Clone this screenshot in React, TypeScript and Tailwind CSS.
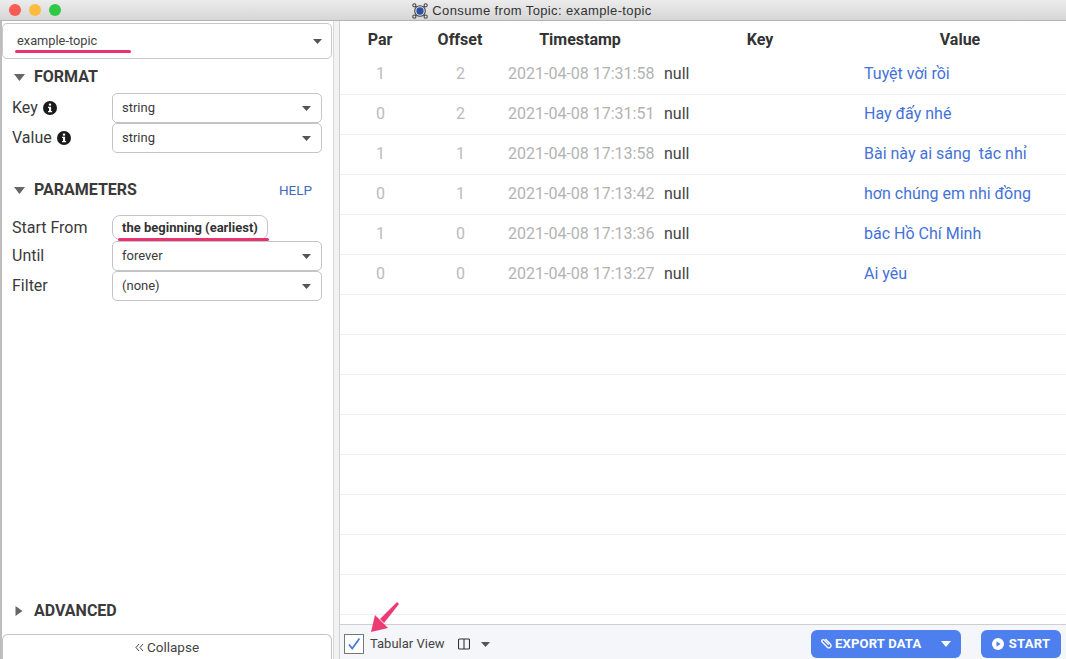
import React from "react";

const rows = [
  ["1", "2", "2021-04-08 17:31:58", "null", "Tuyệt vời rồi"],
  ["0", "2", "2021-04-08 17:31:51", "null", "Hay đấy nhé"],
  ["1", "1", "2021-04-08 17:13:58", "null", "Bài này ai sáng  tác nhỉ"],
  ["0", "1", "2021-04-08 17:13:42", "null", "hơn chúng em nhi đồng"],
  ["1", "0", "2021-04-08 17:13:36", "null", "bác Hồ Chí Minh"],
  ["0", "0", "2021-04-08 17:13:27", "null", "Ai yêu"],
  ...Array.from({ length: 8 }, () => ["", "", "", "", ""]),
];

function Caret({ className = "", w = 9, h = 5 }: { className?: string; w?: number; h?: number }) {
  return (
    <svg width={w} height={h} viewBox="0 0 10 6" preserveAspectRatio="none" className={className}>
      <path d="M0 0h10L5 6z" fill="currentColor" />
    </svg>
  );
}

function CaretRight({ className = "" }: { className?: string }) {
  return (
    <svg width="8" height="10" viewBox="0 0 7 10" className={className}>
      <path d="M0 0l7 5-7 5z" fill="currentColor" />
    </svg>
  );
}

function Info() {
  return (
    <svg width="14" height="14" viewBox="0 0 14 14" className="shrink-0">
      <circle cx="7" cy="7" r="7" fill="#1a1a1a" />
      <rect x="5.9" y="2.6" width="2.2" height="2" fill="#fff" />
      <path d="M5 5.7h3.1v4.2h1v1.3H5V9.9h1V7H5z" fill="#fff" />
    </svg>
  );
}

function Field({ label, info, value }: { label: string; info?: boolean; value: string }) {
  return (
    <div className="flex items-center h-[30px]">
      <div className="w-[100px] flex items-center gap-[5px] text-[16px] text-[#3a3a3a]">
        <span>{label}</span>
        {info && <Info />}
      </div>
      <div className="w-[210px] h-[30px] border border-[#c4c4c4] rounded-[5px] bg-white flex items-center justify-between pl-[9px] pr-[10px] text-[13px] text-[#3a3a3a]">
        <span>{value}</span>
        <Caret className="text-[#555]" />
      </div>
    </div>
  );
}

function Heading({ text, right }: { text: string; right?: boolean }) {
  return (
    <div className="flex items-center">
      <span className="w-[22px] pl-[2px] flex justify-start">
        {right ? (
          <CaretRight className="text-[#666] ml-[1px]" />
        ) : (
          <Caret w={11} h={7} className="text-[#666]" />
        )}
      </span>
      <span className="text-[16px] font-bold text-[#3a3a3a]">{text}</span>
    </div>
  );
}

export default function App() {
  return (
    <div className="relative w-[1066px] h-[659px] overflow-hidden flex flex-col bg-white font-['Roboto',sans-serif]">
      <div className="h-[21px] shrink-0 flex items-center justify-center relative border-b border-[#b4b4b4] bg-gradient-to-b from-[#ececec] to-[#d6d6d6]">
        <div className="absolute left-[9px] top-[4px] flex gap-[8px]">
          <span className="w-[12px] h-[12px] rounded-full bg-[#fb5a55]" />
          <span className="w-[12px] h-[12px] rounded-full bg-[#fdbb3f]" />
          <span className="w-[12px] h-[12px] rounded-full bg-[#2fc945]" />
        </div>
        <div className="flex items-center gap-[4px] pt-[1px] pr-[2px] text-[13px] text-[#333] font-['Liberation_Sans',sans-serif] tracking-[0.37px]">
          <svg width="16" height="16" viewBox="0 0 15 15">
            <path d="M3 3L12 12M12 3L3 12" stroke="#444" strokeWidth="1" />
            <circle cx="7.5" cy="7.5" r="5" fill="#ddd" stroke="#444" />
            <circle cx="7.5" cy="7.5" r="3.4" fill="#2b4fa8" />
            <circle cx="2.2" cy="2.2" r="1.5" fill="none" stroke="#444" />
            <circle cx="12.8" cy="2.2" r="1.5" fill="none" stroke="#444" />
            <circle cx="2.2" cy="12.8" r="1.5" fill="none" stroke="#444" />
            <circle cx="12.8" cy="12.8" r="1.5" fill="none" stroke="#444" />
          </svg>
          <span>Consume from Topic: example-topic</span>
        </div>
      </div>

      <div className="flex-1 flex min-h-0">
        {/* sidebar */}
        <aside className="w-[334px] shrink-0 flex flex-col border-l-2 border-r border-l-[#bdbdbd] border-r-[#d8d8d8] bg-white">
          <div className="h-[36px] mt-[2px] mr-[1px] shrink-0 border border-[#c8c8c8] rounded-[5px] flex items-center justify-between pl-[14px] pr-[9px] text-[12.8px] text-[#444]">
            <span>example-topic</span>
            <Caret className="text-[#555]" />
          </div>
          <div className="pl-[10px] mt-[6px]">
            <Heading text="FORMAT" />
            <div className="mt-[4px] flex flex-col">
              <Field label="Key" info value="string" />
              <Field label="Value" info value="string" />
            </div>
            <div className="mt-[25px] flex items-center justify-between pr-[21px]">
              <Heading text="PARAMETERS" />
              <span className="text-[13.5px] text-[#3f6dbb]">HELP</span>
            </div>
            <div className="mt-[13px] flex items-center h-[25px]">
              <div className="w-[100px] text-[16px] text-[#3a3a3a]">Start From</div>
              <div className="h-[25px] border border-[#c4c4c4] rounded-[8px] flex items-center px-[9px] text-[13px] font-bold text-[#333]">
                the beginning (earliest)
              </div>
            </div>
            <div className="flex flex-col mt-[1px]">
              <Field label="Until" value="forever" />
              <Field label="Filter" value="(none)" />
            </div>
          </div>
          <div className="mt-auto pl-[10px] mb-[11px]">
            <Heading text="ADVANCED" right />
          </div>
          <div className="h-[25px] mr-[1px] shrink-0 border border-b-0 border-[#c4c4c4] rounded-t-[6px] flex items-center justify-center gap-[3px] text-[13.5px] text-[#444]">
            <svg width="9" height="9" viewBox="0 0 9 9">
              <path d="M4 1L1 4.5 4 8M8 1L5 4.5 8 8" fill="none" stroke="#444" strokeWidth="1" />
            </svg>
            <span>Collapse</span>
          </div>
        </aside>

        <div className="w-[5px] shrink-0 bg-[#f2f2f2]" />

        {/* main */}
        <main className="flex-1 flex flex-col min-w-0 border-l border-[#cfcfcf]">
          <div className="flex-1 min-h-0 overflow-hidden">
            <div className="h-[34px] pt-[3px] flex items-center text-[16px] font-bold text-[#333]">
              <span className="w-[80px] text-center">Par</span>
              <span className="w-[80px] text-center">Offset</span>
              <span className="w-[160px] text-center">Timestamp</span>
              <span className="w-[200px] text-center">Key</span>
              <span className="w-[200px] text-center">Value</span>
            </div>
            {rows.map((r, i) => (
              <div key={i} className="h-[40px] pb-[2px] flex items-center border-b border-[#efefef] text-[16px]">
                <span className="w-[80px] pl-[1px] text-center text-[#bbbbbb]">{r[0]}</span>
                <span className="w-[80px] pl-[1px] text-center text-[#bbbbbb]">{r[1]}</span>
                <span className="w-[160px] pl-[8px] text-[#b3b3b3] whitespace-nowrap">{r[2]}</span>
                <span className="w-[200px] pl-[4px] text-[#444]">{r[3]}</span>
                <span className="w-[200px] pl-[4px] text-[#4472d8] whitespace-pre">{r[4]}</span>
              </div>
            ))}
          </div>
          <div className="h-[35px] pt-[4px] shrink-0 border-t border-[#cfcfcf] bg-[#f4f6fa] flex items-center pl-[4px] pr-[5px]">
            <span className="w-[20px] h-[20px] border border-[#777] bg-white flex items-center justify-center">
              <svg width="14" height="14" viewBox="0 0 14 14">
                <path d="M2 7.5l3.2 4L12.5 1.5" fill="none" stroke="#4a7ae0" strokeWidth="1.8" />
              </svg>
            </span>
            <span className="ml-[6px] text-[13px] text-[#444]">Tabular View</span>
            <svg width="12" height="12" viewBox="0 0 12 12" className="ml-[13px]">
              <rect x="0.5" y="1" width="11" height="10" rx="1" fill="none" stroke="#333" strokeWidth="1.1" />
              <path d="M6 1v10" stroke="#333" strokeWidth="1.1" />
            </svg>
            <Caret className="ml-[11px] text-[#555]" />
            <div className="ml-auto w-[150px] h-[28px] rounded-[6px] bg-[#4d7fee] text-white text-[13px] font-bold flex items-center pl-[9px] pr-[10px]">
              <svg width="12" height="12" viewBox="0 0 12 12" className="mr-[3px]">
                <path d="M5.5 1L10.5 6.2a2.2 2.2 0 0 1-3.2 3L2.2 4a1.4 1.4 0 0 1 2-2L8.6 6.6" fill="none" stroke="#fff" strokeWidth="1.3" />
              </svg>
              <span className="tracking-[0.2px]">EXPORT DATA</span>
              <Caret w={10} h={6} className="ml-auto" />
            </div>
            <div className="ml-[20px] w-[80px] h-[28px] rounded-[6px] bg-[#4d7fee] text-white text-[13px] font-bold flex items-center justify-center gap-[5px]">
              <svg width="12" height="12" viewBox="0 0 12 12">
                <circle cx="6" cy="6" r="6" fill="#fff" />
                <path d="M4.5 3.3l4 2.7-4 2.7z" fill="#4d7fee" />
              </svg>
              <span className="tracking-[0.3px]">START</span>
            </div>
          </div>
        </main>
      </div>

      {/* annotations */}
      <div className="absolute left-[15px] top-[50px] w-[116px] h-[3px] rounded-full bg-[#e8336f]" />
      <div className="absolute left-[118px] top-[238px] w-[151px] h-[3px] rounded-full bg-[#e8336f]" />
      <svg width="32" height="34" viewBox="0 0 32 34" className="absolute left-[369px] top-[601px]">
        <path d="M28 1L30 3L15 22L11 18z" fill="#ec3a72" />
        <path d="M2 31L6 14L19 27z" fill="#ec3a72" />
      </svg>
    </div>
  );
}
